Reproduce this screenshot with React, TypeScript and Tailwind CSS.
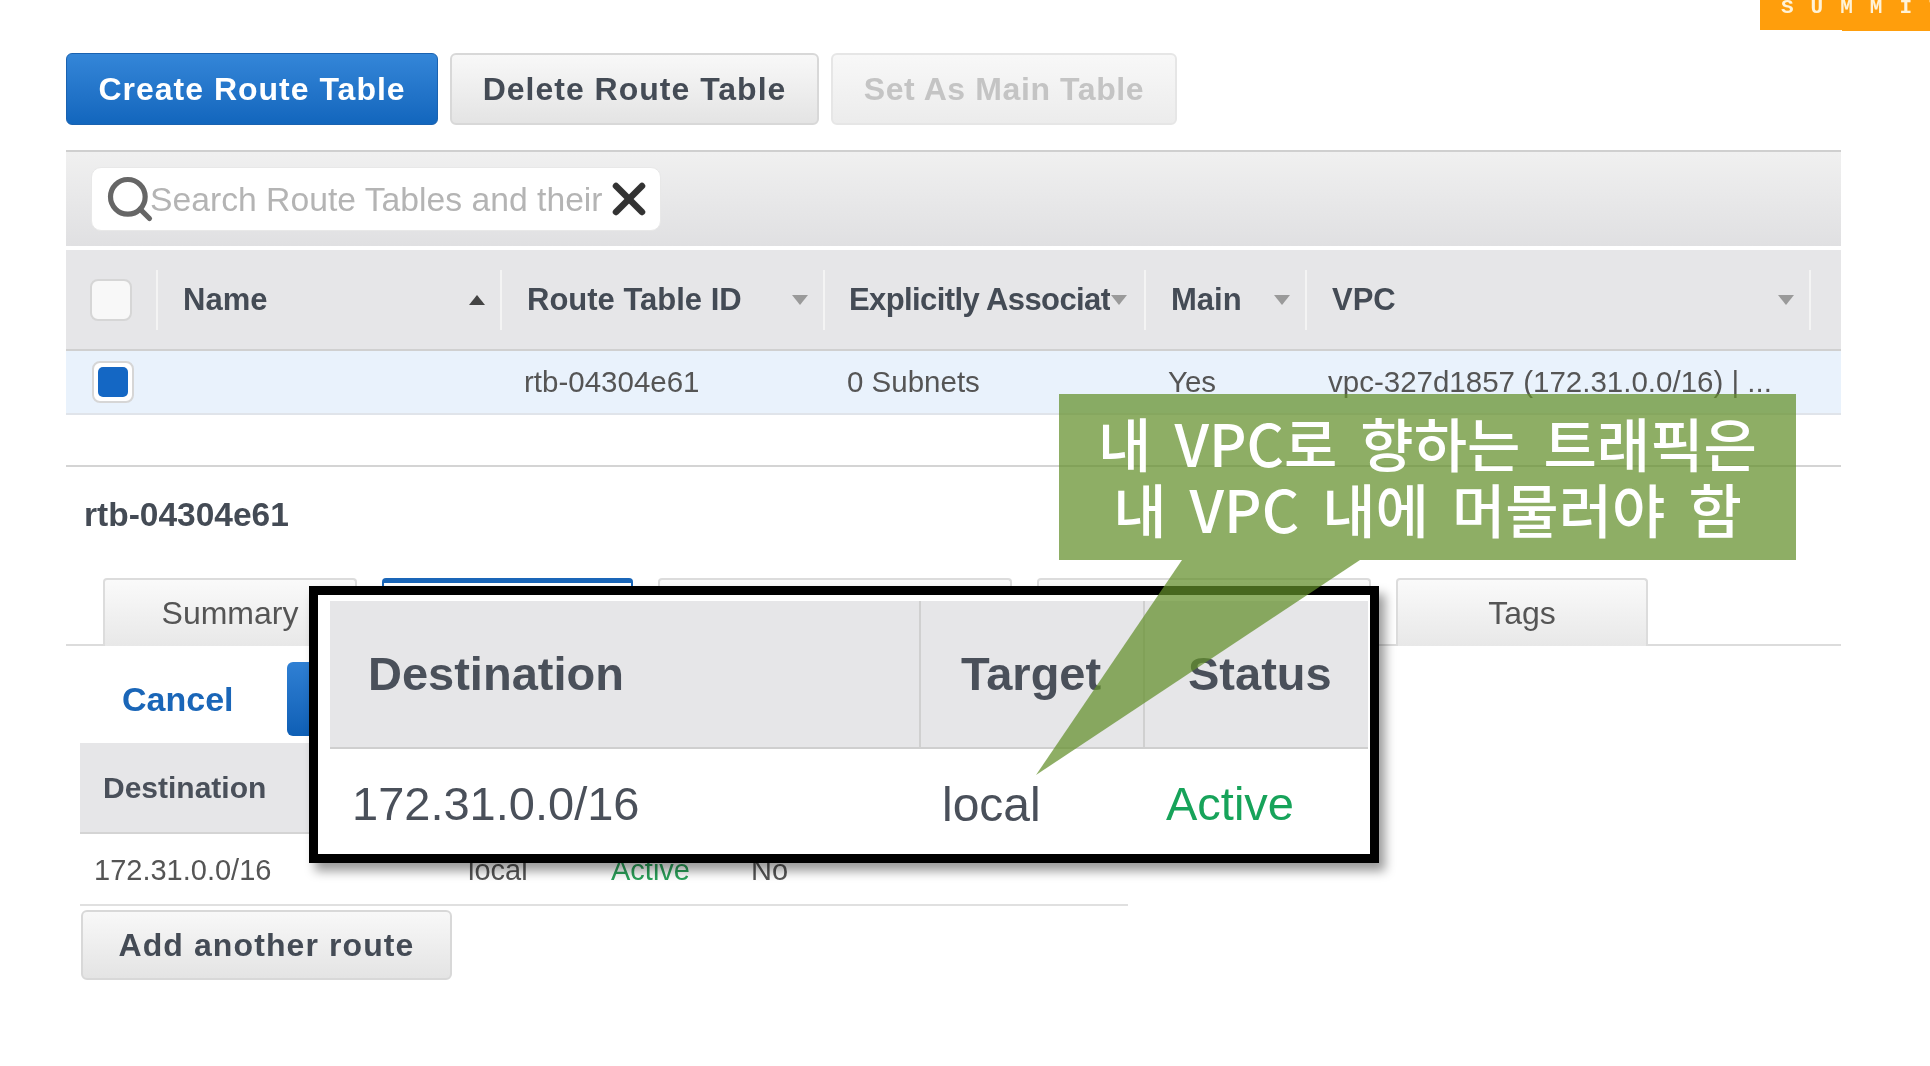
import { Search, X } from "lucide-react";

const FONT = "font-['Liberation_Sans',Arial,sans-serif]";

function Caret({ up, dark }: { up?: boolean; dark?: boolean }) {
  return (
    <svg width="16" height="10" viewBox="0 0 16 10" className="shrink-0">
      <polygon points={up ? "8,0 16,10 0,10" : "0,0 16,0 8,10"} fill={dark ? "#444" : "#9a9a9a"} />
    </svg>
  );
}

function HeaderCell({ label, width, up, dark }: { label: string; width: string; up?: boolean; dark?: boolean }) {
  return (
    <div className={`flex h-[60px] items-center justify-between border-r-2 border-[#f4f4f4] pl-[25px] pr-[15px] ${width}`}>
      <span className="overflow-hidden whitespace-nowrap pt-[2px] text-[31px] font-bold text-[#444b55]">{label}</span>
      <Caret up={up} dark={dark} />
    </div>
  );
}

function Tab({ label, width, active }: { label?: string; width: string; active?: boolean }) {
  return (
    <div
      className={`flex h-[68px] items-center justify-center rounded-t-[4px] border-x-2 border-t-2 text-[32px] text-[#555] ${width} ${
        active ? "border-t-[5px] border-[#1a66b8] bg-white" : "border-[#dcdcdc] bg-gradient-to-b from-[#fafafa] to-[#e8e8e8]"
      }`}
    >
      {label}
    </div>
  );
}

function Zoomed() {
  return (
    <div className="absolute left-[309px] top-[586px] h-[277px] w-[1070px] border-[9px] border-black bg-white pl-[12px] pr-[2px] pt-[6px] shadow-[6px_8px_10px_rgba(0,0,0,0.4)]">
      <div className="flex h-[148px] border-b-2 border-[#cfcfcf] bg-[#e6e6e8] text-[47px] font-bold text-[#4a505a]">
        <div className="flex w-[591px] items-center border-r-2 border-[#d0d0d0] pl-[38px]">Destination</div>
        <div className="flex w-[224px] items-center border-r-2 border-[#d0d0d0] pl-[40px]">Target</div>
        <div className="flex flex-1 items-center pl-[43px]">Status</div>
      </div>
      <div className="flex h-[105px] items-center pt-[6px] text-[47px] text-[#4a505a]">
        <div className="w-[591px] pl-[22px]">172.31.0.0/16</div>
        <div className="w-[224px] pl-[21px]"><span className="text-[48px]">local</span></div>
        <div className="pl-[21px] text-[#17a35a]">Active</div>
      </div>
    </div>
  );
}

function Callout() {
  return (
    <>
      <svg width="1930" height="1066" className="pointer-events-none absolute left-0 top-0">
        <polygon points="1182,560 1360,560 1036,775" fill="#638f2a" fillOpacity="0.72" />
      </svg>
      <div className="absolute left-[1059px] top-[394px] flex h-[166px] w-[737px] flex-col items-center justify-center bg-[#638f2a]/[0.72] pb-[5px] font-['Noto_Sans_CJK_KR','Noto_Sans',sans-serif] text-[58px] font-medium leading-[66px] text-white [word-spacing:10px]">
        <div className="whitespace-nowrap">내 VPC로 향하는 트래픽은</div>
        <div className="whitespace-nowrap">내 VPC 내에 머물러야 함</div>
      </div>
    </>
  );
}

export default function App() {
  return (
    <div className={`relative h-[1066px] w-[1930px] overflow-hidden bg-white blur-[0.5px] ${FONT}`}>
      {/* summit badge */}
      <div className="absolute right-0 top-0 h-[31px] w-[88px] bg-[#ff9e0c]" />
      <div className="absolute right-0 top-0 flex h-[30px] w-[170px] items-end overflow-hidden bg-[#ff9e0c] pl-[21px]">
        <div className="mb-[15px] flex gap-[17px] font-['Liberation_Mono',monospace] text-[21px] font-bold leading-[14px] text-[#fff3d8]">
          <span>S</span><span>U</span><span>M</span><span>M</span><span>I</span><span>T</span>
        </div>
      </div>

      <div className="flex flex-col pl-[66px] pr-[89px] pt-[53px]">
        {/* action buttons */}
        <div className="flex gap-[12px] text-[32px] font-bold">
          <button className="h-[72px] w-[372px] rounded-[6px] border border-[#1a62b0] bg-gradient-to-b from-[#3486d8] to-[#1266bd] tracking-[1px] text-white">Create Route Table</button>
          <button className="h-[72px] w-[369px] rounded-[6px] border-2 border-[#d8d8d8] bg-gradient-to-b from-[#f8f8f8] to-[#e4e4e4] tracking-[1px] text-[#444b55]">Delete Route Table</button>
          <button className="h-[72px] w-[346px] rounded-[6px] border-2 border-[#e6e6e6] bg-gradient-to-b from-[#f8f8f8] to-[#ececec] tracking-[0.6px] text-[#c4c4c4]">Set As Main Table</button>
        </div>

        {/* search bar */}
        <div className="mt-[25px] flex h-[96px] items-center border-t-2 border-[#cfcfcf] bg-gradient-to-b from-[#f0f0f0] to-[#e0e0e2] pl-[25px]">
          <div className="flex h-[64px] w-[570px] items-center overflow-hidden rounded-[10px] border border-[#e8e8e8] bg-white pl-[12px]">
            <Search size={52} strokeWidth={2.4} className="shrink-0 text-[#666]" />
            <span className="-ml-[6px] whitespace-nowrap text-[33.7px] text-[#b4b4b4]">Search Route Tables and their</span>
            <X size={52} strokeWidth={3} className="shrink-0 text-[#333]" />
          </div>
        </div>

        {/* table header */}
        <div className="mt-[4px] flex h-[101px] items-center border-b-2 border-[#d0d0d0] bg-[#e6e6e8]">
          <div className="flex h-[60px] w-[92px] items-center border-r-2 border-[#f4f4f4] pl-[24px]">
            <div className="h-[42px] w-[42px] rounded-[8px] border-2 border-[#d6d6d6] bg-[#f8f8f8]" />
          </div>
          <HeaderCell label="Name" width="w-[344px]" up dark />
          <HeaderCell label="Route Table ID" width="w-[323px]" />
          <HeaderCell label="Explicitly Associat" width="w-[321px] !pl-[24px] !pr-[17px] [&>span]:tracking-[-0.6px]" />
          <HeaderCell label="Main" width="w-[161px]" />
          <HeaderCell label="VPC" width="w-[504px]" />
        </div>

        {/* selected row */}
        <div className="flex h-[64px] items-center border-b-2 border-[#e0e4ea] bg-[#e9f2fc] text-[29.5px] text-[#555]">
          <div className="w-[92px] pl-[26px]">
            <div className="h-[42px] w-[42px] rounded-[8px] border-2 border-[#d6d6d6] bg-white p-[4px]">
              <div className="h-full w-full rounded-[5px] bg-[#1467c4]" />
            </div>
          </div>
          <div className="w-[344px]" />
          <div className="w-[323px] pl-[22px]">rtb-04304e61</div>
          <div className="w-[321px] pl-[22px]">0 Subnets</div>
          <div className="w-[161px] pl-[22px]">Yes</div>
          <div className="whitespace-nowrap pl-[21px]">vpc-327d1857 (172.31.0.0/16) | ...</div>
        </div>

        {/* details */}
        <div className="mt-[50px] border-t-2 border-[#d4d4d4] pl-[18px] pt-[28px] text-[33.5px] font-bold leading-[40px] text-[#444b55]">rtb-04304e61</div>

        <div className="mt-[43px] flex h-[68px] gap-[25px] border-b-2 border-[#dcdcdc] pl-[37px]">
          <div className="flex w-[254px]"><Tab label="Summary" width="w-full" /></div>
          <Tab width="w-[251px]" active />
          <Tab width="w-[354px]" />
          <Tab width="w-[334px]" />
          <Tab label="Tags" width="w-[252px]" />
        </div>

        <div className="ml-[14px] mt-[16px] flex h-[74px] items-center">
          <span className="ml-[42px] text-[34px] font-bold text-[#1a66b8]">Cancel</span>
          <button className="ml-[53px] h-[74px] w-[150px] rounded-[6px] bg-gradient-to-b from-[#2f80d4] to-[#0e5fb5]" />
        </div>

        <div className="ml-[14px] mt-[7px] w-[1048px]">
          <div className="flex h-[91px] items-center border-b-2 border-[#d4d4d4] bg-[#e6e6e8] pl-[23px] text-[30px] font-bold text-[#4a505a]">Destination</div>
          <div className="flex h-[72px] items-center border-b-2 border-[#e0e0e0] pt-[3px] text-[29px] text-[#555]">
            <div className="w-[388px] pl-[14px]">172.31.0.0/16</div>
            <div className="w-[143px]">local</div>
            <div className="w-[140px] text-[#2ba15a]">Active</div>
            <div>No</div>
          </div>
        </div>

        <button className="ml-[15px] mt-[4px] h-[70px] w-[371px] rounded-[6px] border-2 border-[#d8d8d8] bg-gradient-to-b from-[#f8f8f8] to-[#e4e4e4] text-[32px] font-bold tracking-[1.1px] text-[#444b55]">Add another route</button>
      </div>

      <Zoomed />
      <Callout />
    </div>
  );
}
